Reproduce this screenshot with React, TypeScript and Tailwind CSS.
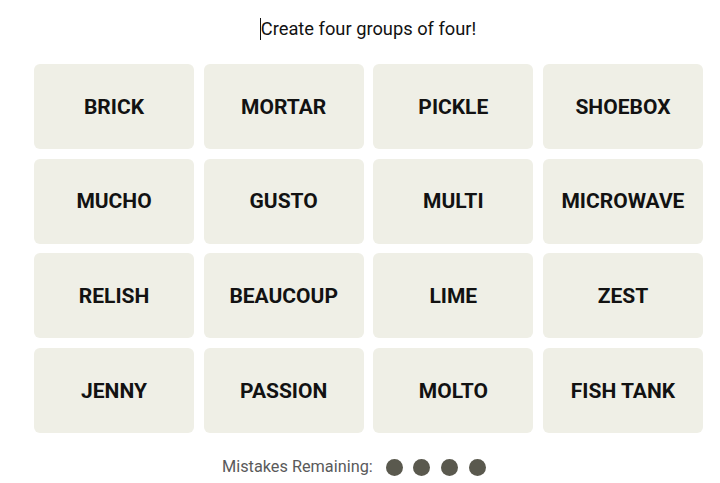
const words = [
  'BRICK', 'MORTAR', 'PICKLE', 'SHOEBOX',
  'MUCHO', 'GUSTO', 'MULTI', 'MICROWAVE',
  'RELISH', 'BEAUCOUP', 'LIME', 'ZEST',
  'JENNY', 'PASSION', 'MOLTO', 'FISH TANK',
]

function Tile({ word }: { word: string }) {
  return (
    <div className="h-[85px] pt-[2px] rounded-[6px] bg-[#efefe6] flex items-center justify-center">
      <span className="text-[21px] font-bold text-[#121212]">{word}</span>
    </div>
  )
}

export default function App() {
  return (
    <div className="w-[720px] h-[483px] bg-white overflow-hidden" style={{ fontFamily: 'Roboto, "Liberation Sans", sans-serif' }}>
      <div className="ml-[34px] w-[669px] flex flex-col">
        <div className="h-[64px] pt-[17px] flex justify-center">
          <div className="relative text-[18.3px] leading-[24px] text-[#121212]">
            <span className="absolute left-[-1px] top-[1px] w-px h-[22px] bg-[#121212]" />
            Create four groups of four!
          </div>
        </div>
        <div className="grid grid-cols-4 gap-x-[9.6px] gap-y-[9.7px]">
          {words.map((w) => (
            <Tile key={w} word={w} />
          ))}
        </div>
      </div>
      <div className="mt-[24px] ml-[222px] flex items-center h-[20px]">
        <span className="text-[16.3px] text-[#5a5a5a]">Mistakes Remaining:</span>
        <div className="ml-[13px] flex gap-[10.7px]">
          <span className="w-[17px] h-[17px] rounded-full bg-[#5a594e]" />
          <span className="w-[17px] h-[17px] rounded-full bg-[#5a594e]" />
          <span className="w-[17px] h-[17px] rounded-full bg-[#5a594e]" />
          <span className="w-[17px] h-[17px] rounded-full bg-[#5a594e]" />
        </div>
      </div>
    </div>
  )
}
